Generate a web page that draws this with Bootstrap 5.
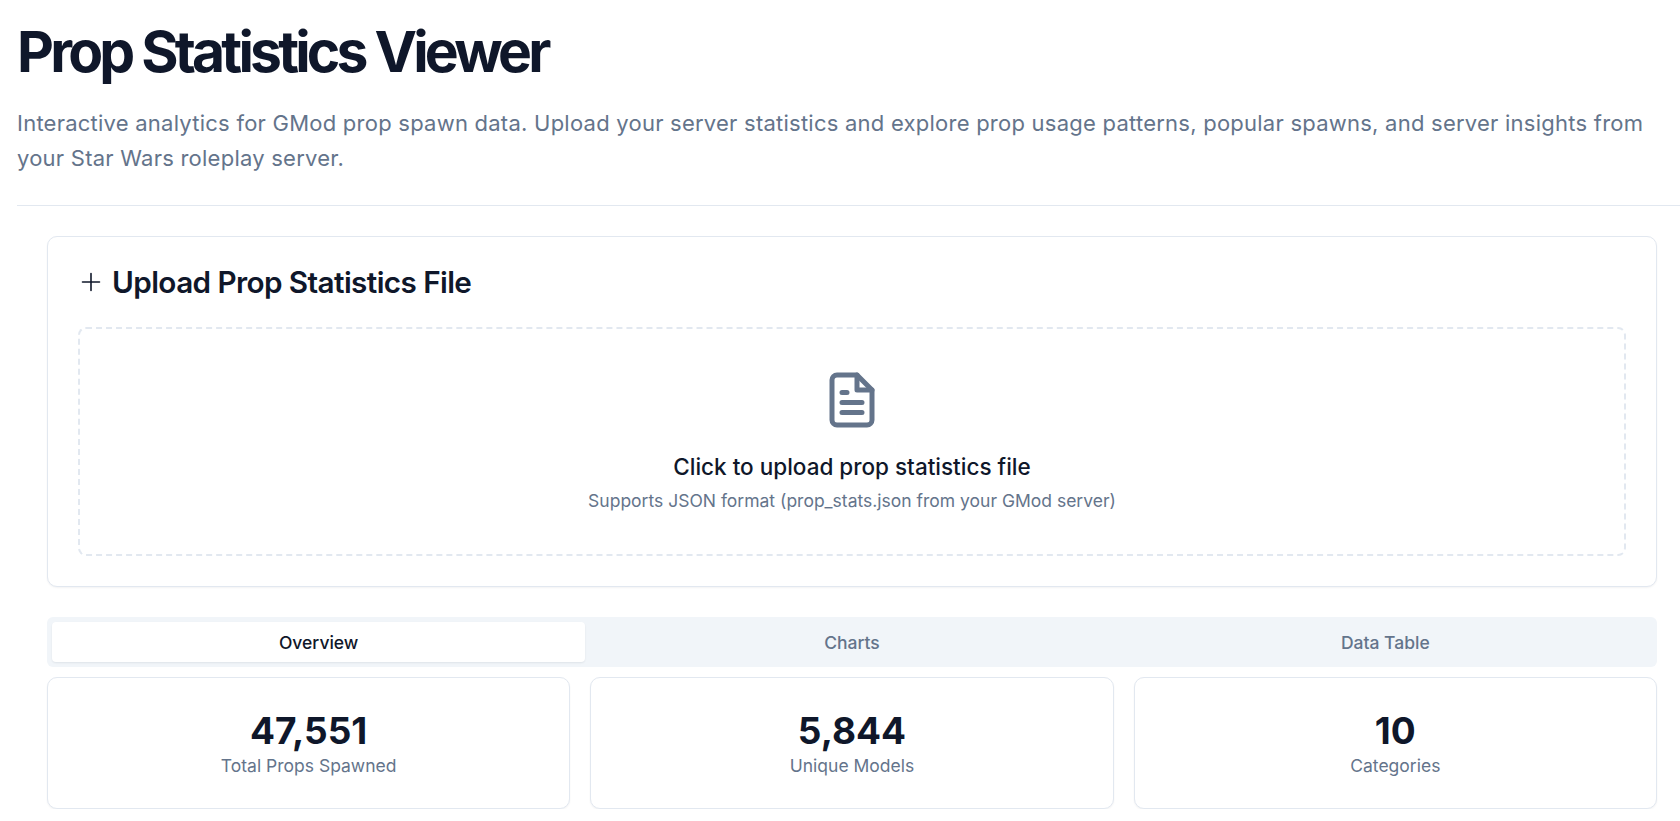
<!DOCTYPE html>
<html lang="en">
<head>
    <meta charset="UTF-8">
    <title>Prop Statistics Viewer</title>
    <link href="https://cdn.jsdelivr.net/npm/bootstrap@5.3.3/dist/css/bootstrap.min.css" rel="stylesheet">
    <style>
        body { font-family: Inter, "Liberation Sans", sans-serif; color: #0f172a; background: #fff; overflow: hidden; }
        .page-head { padding: 19px 0 0 17px; }
        .page-title { font-size: 57px; line-height: 66px; font-weight: 700; letter-spacing: -3.8px; margin: 0 0 21px; color: #0f172a; }
        .page-sub { font-size: 22px; line-height: 35px; letter-spacing: 0.24px; color: #64748b; margin: 0; padding-right: 16px; }
        .head-rule { height: 1px; background: #e2e8f0; margin-top: 29px; }
        .page-body { padding: 30px 23px 0 47px; }
        .panel { border: 1px solid #e2e8f0; border-radius: 10px; box-shadow: 0 1px 2px rgba(15, 23, 42, .05); }
        .upload-panel { height: 351px; padding: 29px 30px 30px; }
        .upload-title { font-size: 29.7px; line-height: 32px; font-weight: 600; letter-spacing: -0.02em; margin: 0 0 29px; color: #0f172a; }
        .title-gap { gap: 9px; }
        .plus-mark { margin-left: 1px; }
        .drop-zone { height: 229px; border: 2px dashed #e2e8f0; border-radius: 8px; padding-top: 41px; }
        .drop-main { font-size: 22.5px; line-height: 30px; font-weight: 500; margin: 22px 0 7px; color: #0f172a; }
        .drop-note { font-size: 17.5px; line-height: 24px; color: #64748b; margin: 0; }
        .tab-strip { margin-top: 30px; height: 50px; padding: 5px; background: #f1f5f9; border-radius: 6px; }
        .tab-strip .nav-link { height: 40px; padding: 2px 0 0; font-size: 17.5px; font-weight: 500; color: #64748b; border-radius: 4px; }
        .tab-strip .nav-link.active { background: #fff; color: #0f172a; box-shadow: 0 1px 2px rgba(15, 23, 42, .08); }
        .stat-row { margin-top: 10px; gap: 20px; }
        .stat-box { flex: 1 1 0; height: 132px; text-align: center; padding-top: 31px; }
        .stat-num { font-size: 37px; line-height: 44px; font-weight: 700; color: #0f172a; }
        .stat-cap { font-size: 17.5px; line-height: 24px; margin-top: 1px; color: #64748b; }
    </style>
</head>
<body>
    <div class="page-head">
        <h1 class="page-title">Prop Statistics Viewer</h1>
        <p class="page-sub">Interactive analytics for GMod prop spawn data. Upload your server statistics and explore prop usage patterns, popular spawns, and server insights from your Star Wars roleplay server.</p>
        <div class="head-rule"></div>
    </div>
    <div class="page-body">
        <div class="card panel upload-panel">
            <h2 class="upload-title d-flex align-items-center title-gap">
                <svg class="plus-mark" width="24" height="24" viewBox="0 0 24 24" fill="none" stroke="#0f172a" stroke-width="1.6" stroke-linecap="round"><path d="M12 3.5v17M3.5 12h17"/></svg>
                Upload Prop Statistics File
            </h2>
            <div class="drop-zone d-flex flex-column align-items-center">
                <svg width="60" height="60" viewBox="0 0 24 24" fill="none" stroke="#64748b" stroke-width="2" stroke-linecap="round" stroke-linejoin="round"><path d="M14 2H6a2 2 0 0 0-2 2v16a2 2 0 0 0 2 2h12a2 2 0 0 0 2-2V8z"/><path d="M14 2v6h6"/><path d="M16 13H8M16 17H8M10 9H8"/></svg>
                <p class="drop-main">Click to upload prop statistics file</p>
                <p class="drop-note">Supports JSON format (prop_stats.json from your GMod server)</p>
            </div>
        </div>
        <ul class="nav nav-justified tab-strip">
            <li class="nav-item"><a class="nav-link active d-flex align-items-center justify-content-center" href="#">Overview</a></li>
            <li class="nav-item"><a class="nav-link d-flex align-items-center justify-content-center" href="#">Charts</a></li>
            <li class="nav-item"><a class="nav-link d-flex align-items-center justify-content-center" href="#">Data Table</a></li>
        </ul>
        <div class="d-flex stat-row">
            <div class="card panel stat-box"><div class="stat-num">47,551</div><div class="stat-cap">Total Props Spawned</div></div>
            <div class="card panel stat-box"><div class="stat-num">5,844</div><div class="stat-cap">Unique Models</div></div>
            <div class="card panel stat-box"><div class="stat-num">10</div><div class="stat-cap">Categories</div></div>
        </div>
    </div>
    <script src="https://cdn.jsdelivr.net/npm/bootstrap@5.3.3/dist/js/bootstrap.bundle.min.js"></script>
</body>
</html>
